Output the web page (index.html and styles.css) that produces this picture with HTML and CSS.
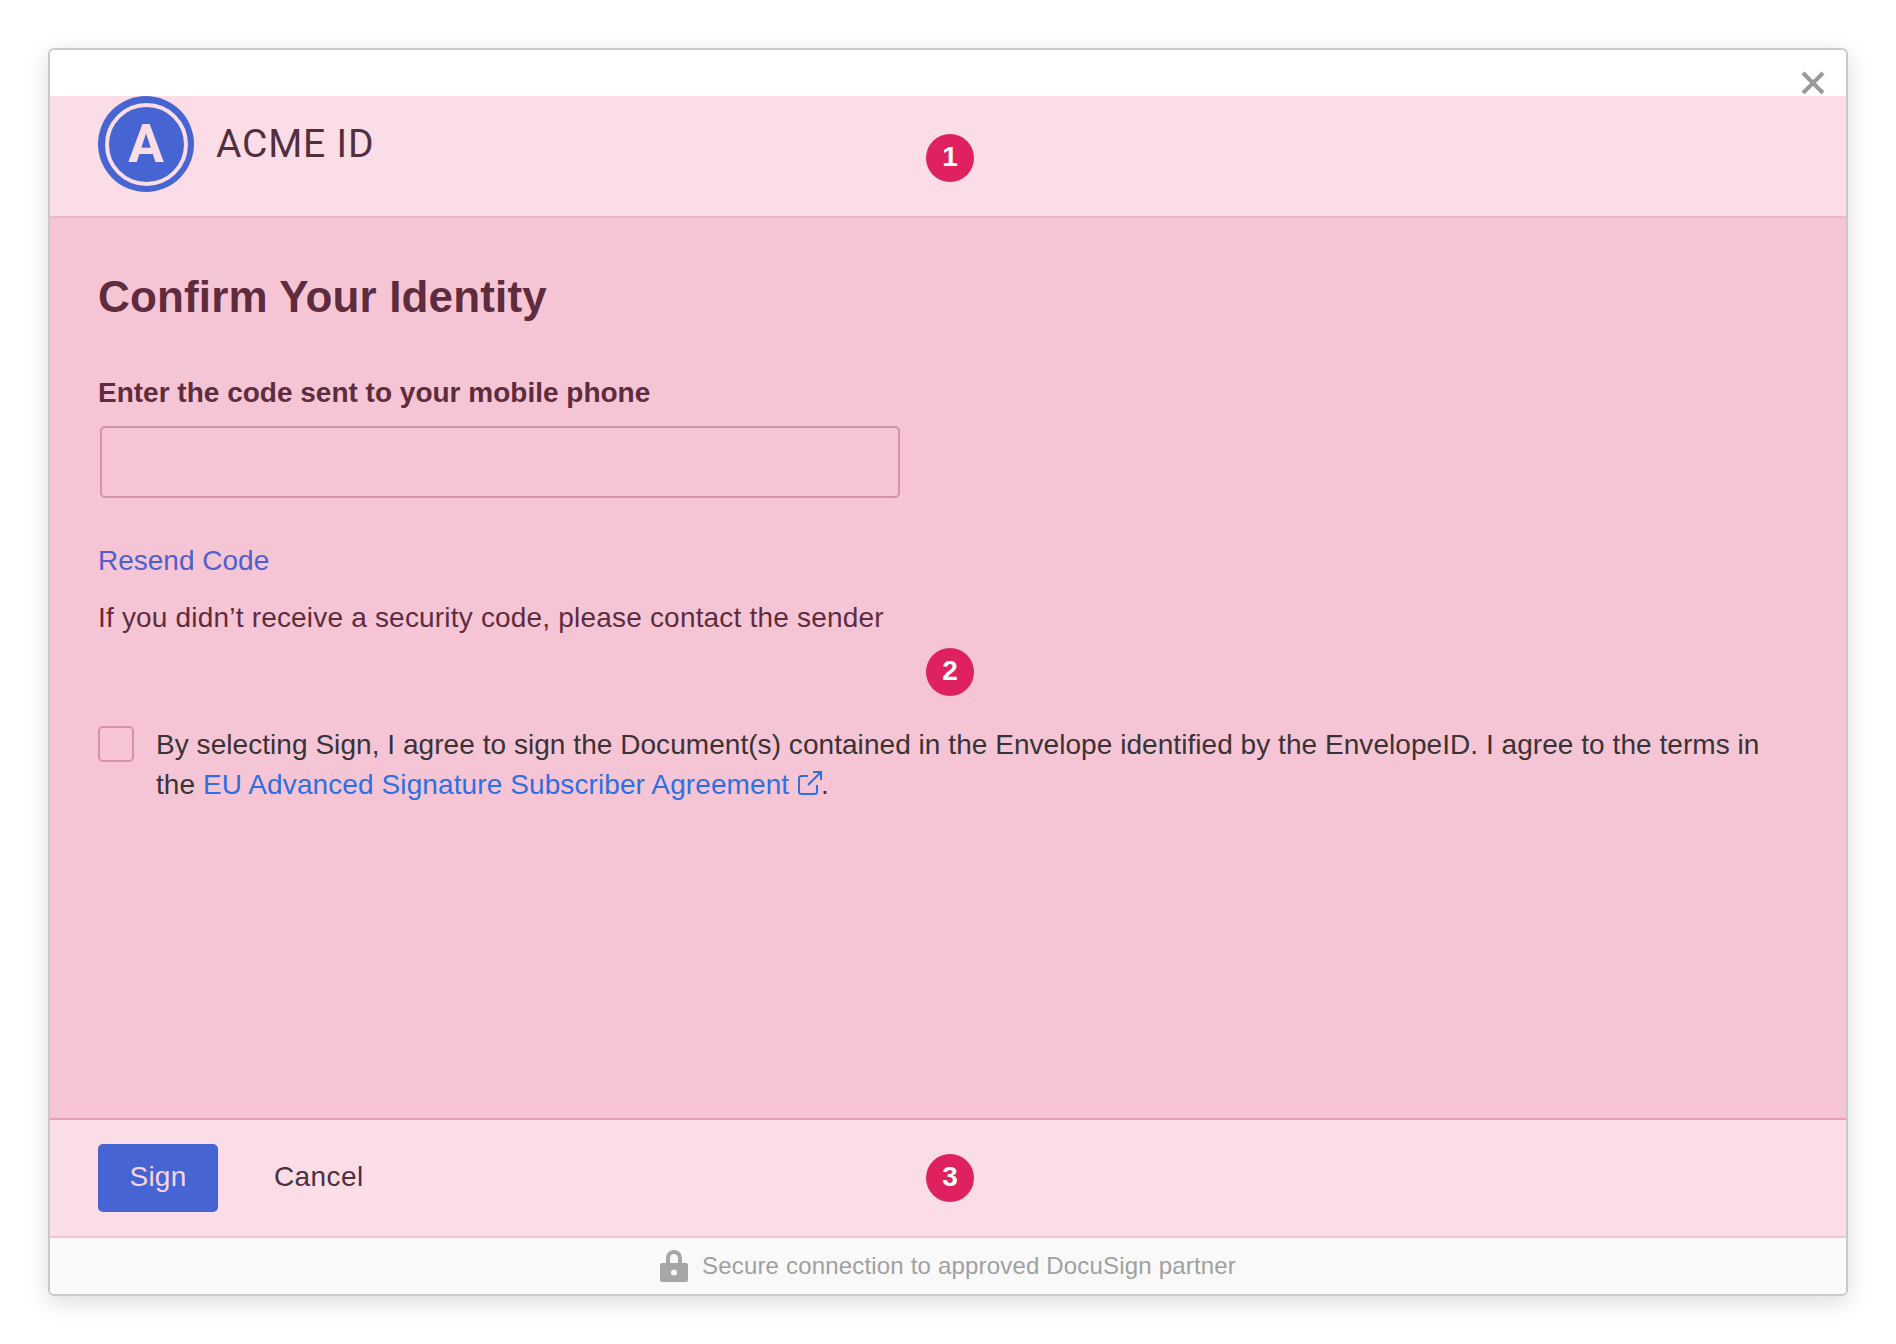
FILE: index.html
```html
<!DOCTYPE html>
<html lang="en">
<head>
<meta charset="utf-8">
<title>Confirm Your Identity</title>
<link rel="stylesheet" href="styles.css">
</head>
<body>
<div class="card">
  <button class="close" aria-label="Close">
    <svg viewBox="0 0 24 24" width="24" height="24"><path d="M2 2 22 22M22 2 2 22" fill="none" stroke="#999" stroke-width="4"/></svg>
  </button>
  <div class="top-space"></div>
  <header class="brand">
    <div class="logo"><span class="logo-ring"><span class="logo-letter">A</span></span></div>
    <div class="brand-name">ACME ID</div>
    <span class="badge badge-one">1</span>
  </header>
  <main class="main">
    <h1 class="title">Confirm Your Identity</h1>
    <label class="label" for="code">Enter the code sent to your mobile phone</label>
    <input class="code-input" id="code" type="text">
    <a class="resend" href="#">Resend Code</a>
    <p class="hint">If you didn’t receive a security code, please contact the sender</p>
    <span class="badge badge-two">2</span>
    <div class="consent">
      <span class="checkbox"></span>
      <p class="consent-text">By selecting Sign, I agree to sign the Document(s) contained in the Envelope identified by the EnvelopeID. I agree to the terms in the <a class="agreement" href="#">EU Advanced Signature Subscriber Agreement&nbsp;<svg class="ext" viewBox="0 0 26 26" width="26" height="26"><path d="M11 6H4.500A2.500 2.500 0 0 0 2 8.500V21.500A2.500 2.500 0 0 0 4.500 24H17.500A2.500 2.500 0 0 0 20 21.500V15M11 15 24 2M16 2H24V10" fill="none" stroke="currentColor" stroke-width="2"/></svg></a>.</p>
    </div>
  </main>
  <div class="actions">
    <button class="sign">Sign</button>
    <button class="cancel">Cancel</button>
    <span class="badge badge-three">3</span>
  </div>
  <footer class="secure">
    <svg class="lock" viewBox="0 0 28 32" width="28" height="32"><path fill-rule="evenodd" d="M6 13V8.500C6 3.500 9.500 0 14 0s8 3.500 8 8.500V13h4a2 2 0 0 1 2 2v15a2 2 0 0 1-2 2H2a2 2 0 0 1-2-2V15a2 2 0 0 1 2-2ZM10 13h8V8.500C18 6 16.500 4 14 4s-4 2-4 4.500ZM14 19.500a3 3 0 1 0 0 6 3 3 0 0 0 0-6Z" fill="#a6a6a6"/></svg>
    <span class="secure-text">Secure connection to approved DocuSign partner</span>
  </footer>
</div>
</body>
</html>
```
FILE: styles.css
```css
* { box-sizing: border-box; }
html, body { margin: 0; padding: 0; background: #fff; }
body { padding: 48px; font-family: "Liberation Sans", Arial, sans-serif; font-size: 28px; line-height: 40px; color: #333; }
.card { position: relative; width: 1800px; height: 1248px; display: flex; flex-direction: column; border: 2px solid #c9c9c9; border-radius: 6px; background: #fff; box-shadow: 0 6px 24px rgba(0,0,0,.14); }
.top-space { height: 46px; flex: none; }
.close { position: absolute; top: 21px; right: 21px; width: 24px; height: 24px; padding: 0; border: 0; background: none; }
.close svg { display: block; }
.brand { position: relative; flex: none; height: 122px; display: flex; align-items: flex-start; gap: 22px; padding-left: 48px; background: #fbdde8; border-bottom: 2px solid #ecb7cb; }
.logo { width: 96px; height: 96px; border-radius: 50%; background: #4664d2; display: flex; align-items: center; justify-content: center; }
.logo-ring { width: 83px; height: 83px; border-radius: 50%; border: 4.500px solid #fbdde8; display: flex; align-items: center; justify-content: center; }
.logo-letter { font-family: Roboto, sans-serif; font-weight: 700; font-size: 53px; line-height: 1; color: #fbdde8; }
.brand-name { font-family: Roboto, sans-serif; font-weight: 400; font-size: 39px; line-height: 96px; letter-spacing: .8px; color: #532f3d; }
.badge { position: absolute; left: 876px; width: 48px; height: 48px; border-radius: 50%; background: #e0215f; color: #fff; font-weight: 700; font-size: 28px; line-height: 46px; text-align: center; }
.badge-one { top: 38px; }
.badge-two { top: 430px; }
.badge-three { top: 34px; }
.main { position: relative; flex: none; height: 902px; padding: 53px 48px 0; background: #f6c5d5; border-bottom: 2px solid #e79db7; display: flex; flex-direction: column; align-items: flex-start; color: #5f2c3e; }
.title { margin: 0; font-size: 44px; line-height: 52px; font-weight: 700; letter-spacing: .15px; color: #5f2c3e; }
.label { margin-top: 50px; font-weight: 700; line-height: 40px; }
.code-input { display: block; width: 800px; height: 72px; margin: 13px 0 0 2px; background: transparent; border: 2px solid #d095ab; border-radius: 5px; outline: none; }
.resend { margin-top: 43px; color: #4f5fcb; text-decoration: none; }
.hint { margin: 17px 0 0; color: #5f2c3e; letter-spacing: .19px; }
.consent { display: flex; gap: 22px; margin-top: 87px; width: 100%; color: #3a3336; }
.checkbox { flex: none; width: 36px; height: 36px; margin-top: 1px; border: 2px solid #d493ab; border-radius: 5px; }
.consent-text { margin: 0; width: 1620px; letter-spacing: .05px; }
.agreement { color: #2f6fe0; text-decoration: none; letter-spacing: .1px; }
.ext { vertical-align: -2px; margin-right: -2px; }
.actions { position: relative; flex: none; height: 118px; display: flex; align-items: center; padding: 0 48px; gap: 56px; background: #fbdde8; border-bottom: 2px solid #efc6d5; }
.sign { width: 120px; height: 68px; padding: 0 0 2px; border: 0; border-radius: 5px; background: #4664d2; color: #f8d5e4; font: 28px "Liberation Sans", Arial, sans-serif; letter-spacing: .2px; }
.cancel { padding: 0 0 2px; border: 0; background: none; color: #4e2f3c; font: 28px "Liberation Sans", Arial, sans-serif; letter-spacing: .4px; }
.secure { flex: 1; display: flex; align-items: center; justify-content: center; gap: 14px; background: #f9f9f9; color: #a0a0a0; font-size: 24px; border-radius: 0 0 4px 4px; }
.secure-text { letter-spacing: .18px; }
```
